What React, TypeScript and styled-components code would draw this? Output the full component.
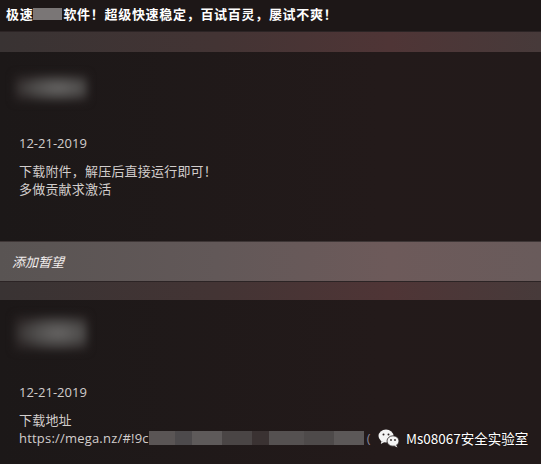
import React from "react";
import styled, { createGlobalStyle } from "styled-components";

const GlobalStyle = createGlobalStyle`
  * {
    margin: 0;
    padding: 0;
    box-sizing: border-box;
  }

  body {
    width: 541px;
    height: 464px;
    overflow: hidden;
    background-color: #211a1a;
    font-family: "Open Sans", "Noto Sans CJK SC", sans-serif;
    font-size: 13px;
    color: #cfcac9;
  }
`;

const Page = styled.div`
  position: relative;
  width: 541px;
  height: 464px;
  display: flex;
  flex-direction: column;
  background: linear-gradient(90deg, #1c1818 0%, #231a1a 70%, #221a1a 100%);
`;

const TitleBar = styled.h1`
  height: 31px;
  padding: 5px 0 0 6px;
  display: flex;
  align-items: flex-start;
  font-family: "Noto Sans CJK SC", sans-serif;
  font-size: 13px;
  font-weight: 700;
  line-height: 18px;
  letter-spacing: 0.7px;
  color: #fff;
  background-color: #1d1717;
`;

const Censor = styled.span<{ $w: number; $h: number }>`
  display: inline-block;
  width: ${(p) => p.$w}px;
  height: ${(p) => p.$h}px;
  background: #7a7676;
  margin: 3px 1px 0 0;
`;

const Band = styled.div<{ $h: number }>`
  height: ${(p) => p.$h}px;
  background: linear-gradient(90deg, #393333 0%, #433434 40%, #4f3536 72%, #473a3a 100%);
  border-top: 1px solid #2c2425;
`;

const Post = styled.section<{ $h: number }>`
  height: ${(p) => p.$h}px;
  padding-left: 19px;
  display: flex;
  flex-direction: column;
`;

const NameBlur = styled.div<{ $top: number; $h: number }>`
  margin: ${(p) => p.$top}px 0 0 -4px;
  width: 72px;
  height: ${(p) => p.$h}px;
  background: radial-gradient(ellipse at 60% 50%, #6a6867 0%, #4a4847 45%, #2a2424 80%);
  filter: blur(4px);
`;

const DateLine = styled.div<{ $gap: number }>`
  margin-top: ${(p) => p.$gap}px;
  line-height: 18px;
  color: #d2cdcc;
`;

const Body = styled.div`
  margin-top: 10px;
  line-height: 18px;
  color: #d2cdcc;
`;

const Line = styled.p`
  display: flex;
  align-items: center;
  white-space: nowrap;
  letter-spacing: 0.2px;
`;

const Pixels = styled.span`
  display: inline-block;
  width: 215px;
  height: 14px;
  background: linear-gradient(
    90deg,
    #5a5555 0 12%,
    #4d4a4c 12% 20%,
    #5e5a5a 20% 34%,
    #4a4545 34% 48%,
    #3a3232 48% 56%,
    #555151 56% 72%,
    #4e4a4a 72% 86%,
    #5c5858 86% 100%
  );
`;

const Faint = styled.span`
  margin-left: 3px;
  color: #8a8598;
`;

const WishBar = styled.div`
  height: 40px;
  padding-left: 12px;
  display: flex;
  align-items: center;
  font-style: italic;
  color: #f2eeee;
  background: linear-gradient(90deg, #595453 0%, #625858 40%, #6d5a5a 72%, #695b5b 100%);
  border-top: 1px solid #3e3636;
`;

const Watermark = styled.div`
  position: absolute;
  left: 378px;
  top: 428px;
  display: flex;
  align-items: center;
  gap: 6px;
  font-family: "Noto Sans CJK SC", sans-serif;
  font-size: 13.5px;
  color: #fff;
  text-shadow: 0 0 2px rgba(0, 0, 0, 0.6);
`;

function WeChatIcon() {
  return (
    <svg width="22" height="20" viewBox="0 0 22 20">
      <ellipse cx="8" cy="8" rx="7.5" ry="6.5" fill="#f4f4f4" />
      <path d="M3.5 13 L2.8 16 L6.5 14 Z" fill="#f4f4f4" />
      <circle cx="5.5" cy="6.5" r="1" fill="#2a2323" />
      <circle cx="10.5" cy="6.5" r="1" fill="#2a2323" />
      <ellipse cx="15" cy="13" rx="6" ry="5.2" fill="#f4f4f4" stroke="#2a2323" strokeWidth="0.8" />
      <path d="M18 17 L19.5 19.5 L16 17.8 Z" fill="#f4f4f4" />
      <circle cx="13" cy="12" r="0.9" fill="#2a2323" />
      <circle cx="17" cy="12" r="0.9" fill="#2a2323" />
    </svg>
  );
}

export default function App() {
  return (
    <Page>
      <GlobalStyle />
      <TitleBar>
        极速<Censor $w={29} $h={12} />软件！超级快速稳定，百试百灵，屡试不爽！
      </TitleBar>
      <Band $h={21} />
      <Post $h={189}>
        <NameBlur $top={23} $h={26} />
        <DateLine $gap={33}>12-21-2019</DateLine>
        <Body>
          <Line>下载附件，解压后直接运行即可！</Line>
          <Line>多做贡献求激活</Line>
        </Body>
      </Post>
      <WishBar>添加暂望</WishBar>
      <Band $h={19} />
      <Post $h={164}>
        <NameBlur $top={16} $h={34} />
        <DateLine $gap={33}>12-21-2019</DateLine>
        <Body>
          <Line>
            下载地址
          </Line>
          <Line>
            https://mega.nz/#!9c<Pixels />
            <Faint>(</Faint>
          </Line>
        </Body>
      </Post>
      <Watermark>
        <WeChatIcon />
        <span>Ms08067安全实验室</span>
      </Watermark>
    </Page>
  );
}
